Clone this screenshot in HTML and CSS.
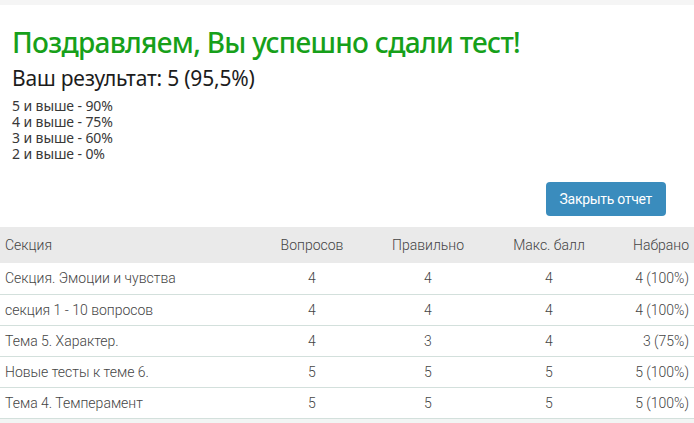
FILE: index.html
```html
<!DOCTYPE html>
<html lang="ru">
<head>
<meta charset="utf-8">
<link rel="stylesheet" href="styles.css">
</head>
<body>
<div class="topbar"></div>
<div class="report">
  <h1 class="title">Поздравляем, Вы успешно сдали тест!</h1>
  <h2 class="result">Ваш результат: 5 (95,5%)</h2>
  <div class="grades">
    <div>5 и выше - 90%</div>
    <div>4 и выше - 75%</div>
    <div>3 и выше - 60%</div>
    <div>2 и выше - 0%</div>
  </div>
  <div class="actions"><button class="btn">Закрыть отчет</button></div>
</div>
<table class="sections">
  <thead>
    <tr><th class="name">Секция</th><th class="c2">Вопросов</th><th class="c3">Правильно</th><th class="c4">Макс. балл</th><th class="score">Набрано</th></tr>
  </thead>
  <tbody>
    <tr><td class="name">Секция. Эмоции и чувства</td><td>4</td><td>4</td><td>4</td><td class="score">4 (100%)</td></tr>
    <tr><td class="name">секция 1 - 10 вопросов</td><td>4</td><td>4</td><td>4</td><td class="score">4 (100%)</td></tr>
    <tr><td class="name">Тема 5. Характер.</td><td>4</td><td>3</td><td>4</td><td class="score">3 (75%)</td></tr>
    <tr><td class="name">Новые тесты к теме 6.</td><td>5</td><td>5</td><td>5</td><td class="score">5 (100%)</td></tr>
    <tr><td class="name">Тема 4. Темперамент</td><td>5</td><td>5</td><td>5</td><td class="score">5 (100%)</td></tr>
  </tbody>
</table>
<div class="footer"></div>
</body>
</html>
```
FILE: styles.css
```css
html, body {
  margin: 0;
  padding: 0;
  background: #fff;
}
body {
  font-family: "Noto Sans", "Open Sans", sans-serif;
  color: #222;
}
.topbar {
  height: 5px;
  background: #f5f5f5;
}
.report {
  padding: 0 28px 0 12px;
}
.title {
  margin: 19px 0 0;
  font-size: 28px;
  line-height: 36px;
  font-weight: 500;
  color: #17a01a;
  letter-spacing: -0.7px;
}
.result {
  margin: 6px 0 0;
  font-size: 21px;
  line-height: 24px;
  font-weight: 400;
  color: #1c1c1c;
  letter-spacing: -0.2px;
}
.grades {
  margin-top: 8px;
  font-size: 14px;
  line-height: 16px;
  color: #383838;
  letter-spacing: -0.1px;
}
.actions {
  display: flex;
  justify-content: flex-end;
  margin-top: 20px;
}
.btn {
  height: 34px;
  padding: 0 14px;
  border: none;
  border-radius: 4px;
  background: #3a8cbd;
  color: #fff;
  font-family: "Roboto", sans-serif;
  font-size: 14px;
  letter-spacing: -0.3px;
}
.sections {
  margin-top: 11px;
  width: 694px;
  table-layout: fixed;
  border-collapse: collapse;
  font-family: "Roboto", sans-serif;
  font-size: 14px;
  font-weight: 300;
  color: #444;
}
.sections th, .sections td {
  box-sizing: border-box;
  padding: 0;
  text-align: center;
}
.sections th {
  height: 36px;
  background: #eaeaea;
  font-weight: 300;
}
.sections td {
  height: 31px;
  border-bottom: 1px solid #d3e0dc;
}
.sections .name {
  text-align: left;
  padding-left: 5px;
  width: 250px;
}
.sections .c2 { width: 124px; }
.sections .c3 { width: 108px; }
.sections .c4 { width: 134px; }
.sections .score {
  text-align: right;
  padding-right: 5px;
  width: 78px;
}
.footer {
  height: 10px;
  background: #f2f5f4;
}
```
